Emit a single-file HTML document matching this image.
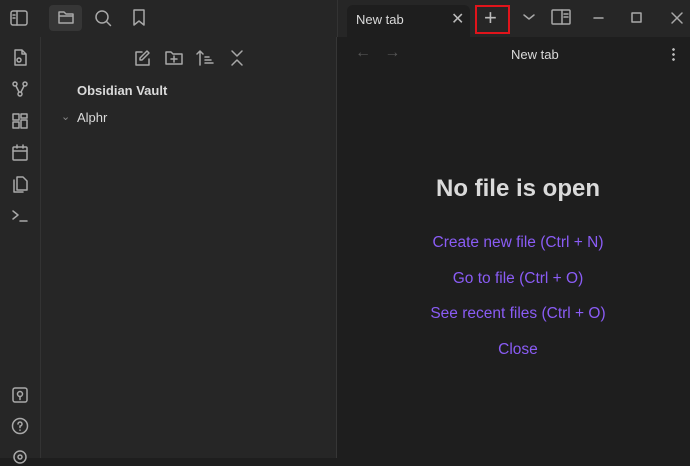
<html><head><style>
body{margin:0;width:690px;height:458px;background:#1e1e1e;font-family:"Liberation Sans",sans-serif;overflow:hidden;position:relative}
.a{position:absolute}
svg{position:absolute;fill:none;stroke:#a8a8a8;stroke-width:1.5;stroke-linecap:round;stroke-linejoin:round}
</style></head><body>
<div class="a" style="left:0;top:0;width:690px;height:37px;background:#262626"></div>
<div class="a" style="left:0;top:37px;width:40px;height:421px;background:#262626;border-right:1px solid #333"></div>
<div class="a" style="left:41px;top:37px;width:295px;height:421px;background:#262626;border-right:1px solid #363636"></div>
<div class="a" style="left:337px;top:0;width:1px;height:37px;background:#333"></div>
<div class="a" style="left:49px;top:5px;width:33px;height:26px;background:#363636;border-radius:4px"></div>
<div class="a" style="left:347px;top:5px;width:123px;height:32px;background:#1e1e1e;border-radius:6px 6px 0 0"></div>
<div class="a" style="left:356px;top:12px;font-size:13px;color:#dadada">New tab</div>
<div class="a" style="left:451px;top:9px;font-size:16px;color:#bbb">✕</div>
<div class="a" style="left:475px;top:5px;width:31px;height:25px;border:2px solid #e0141b"></div>
<div class="a" style="left:484px;top:5px;font-size:22px;color:#bbb">+</div>
<svg style="left:10px;top:10px" width="18" height="16" viewBox="0 0 18 16"><rect x="1" y="1" width="16" height="14" rx="2"/><path d="M7 1v14M3 5h2M3 8h2"/></svg>
<svg style="left:57px;top:9px" width="18" height="16" viewBox="0 0 18 16"><path d="M2 3h5l2 2h7v9H2z M2 7h14"/></svg>
<svg style="left:94px;top:9px" width="18" height="18" viewBox="0 0 18 18"><circle cx="8" cy="8" r="6"/><path d="M12.5 12.5l4 4"/></svg>
<svg style="left:132px;top:9px" width="14" height="17" viewBox="0 0 14 17"><path d="M2 1h10v15l-5-4-5 4z"/></svg>
<svg style="left:522px;top:12px" width="14" height="10" viewBox="0 0 14 10"><path d="M2 3l5 4 5-4"/></svg>
<svg style="left:551px;top:9px" width="20" height="16" viewBox="0 0 20 16"><rect x="1" y="1" width="18" height="14" rx="1"/><path d="M11 1v14M13 5h4M13 8h4"/></svg>
<svg style="left:593px;top:17px" width="12" height="4"><path d="M1 1h9"/></svg>
<svg style="left:631px;top:12px" width="12" height="12"><rect x="1" y="1" width="9" height="9"/></svg>
<svg style="left:670px;top:11px" width="14" height="14"><path d="M2 2l10 10M12 2L2 12"/></svg>
<div class="a" style="left:355px;top:44px;font-size:16px;color:#555">←&nbsp;&nbsp;&nbsp;→</div>
<div class="a" style="left:511px;top:47px;font-size:13px;color:#dadada">New tab</div>
<div class="a" style="left:672px;top:47px;width:3px;height:14px;background:radial-gradient(circle,#bbb 1.2px,transparent 1.5px) 0 0/3px 5px"></div>
<svg style="left:11px;top:49px" width="18" height="18" viewBox="0 0 18 18"><path d="M4 1h7l4 4v11H4z M11 1v4h4"/><circle cx="8" cy="11" r="2"/></svg>
<svg style="left:11px;top:80px" width="18" height="18" viewBox="0 0 18 18"><circle cx="4" cy="4" r="2"/><circle cx="14" cy="4" r="2"/><circle cx="9" cy="14" r="2"/><path d="M5 6l3 6M13 6l-3 6"/></svg>
<svg style="left:11px;top:112px" width="18" height="18" viewBox="0 0 18 18"><rect x="2" y="2" width="6" height="6"/><rect x="10" y="2" width="6" height="4"/><rect x="2" y="10" width="6" height="6"/><rect x="10" y="8" width="6" height="8"/></svg>
<svg style="left:11px;top:144px" width="18" height="18" viewBox="0 0 18 18"><rect x="2" y="3" width="14" height="13" rx="1"/><path d="M2 7h14M6 1v3M12 1v3"/></svg>
<svg style="left:11px;top:175px" width="18" height="18" viewBox="0 0 18 18"><path d="M6 2h6l4 4v9H6z M3 5v12h9"/></svg>
<svg style="left:11px;top:207px" width="18" height="18" viewBox="0 0 18 18"><path d="M2 4l5 4-5 4M9 14h7"/></svg>
<svg style="left:11px;top:386px" width="18" height="18" viewBox="0 0 18 18"><rect x="2" y="2" width="14" height="14" rx="2"/><circle cx="9" cy="8" r="2.5"/><path d="M9 10.5v3"/></svg>
<svg style="left:11px;top:417px" width="18" height="18" viewBox="0 0 18 18"><circle cx="9" cy="9" r="7.5"/><path d="M7 7a2 2 0 1 1 2 2v1.5M9 13v.2"/></svg>
<svg style="left:11px;top:448px" width="18" height="18" viewBox="0 0 18 18"><circle cx="9" cy="9" r="6"/><circle cx="9" cy="9" r="2"/></svg>
<svg style="left:133px;top:49px" width="18" height="18" viewBox="0 0 18 18"><path d="M9 3H3v13h13v-6 M14 2l2 2-7 7H7V9z"/></svg>
<svg style="left:164px;top:50px" width="20" height="16" viewBox="0 0 20 16"><path d="M2 2h5l2 2h9v10H2z M10 6v6M7 9h6"/></svg>
<svg style="left:196px;top:49px" width="18" height="18" viewBox="0 0 18 18"><path d="M4 16V2M1 5l3-3 3 3M9 8h4M9 11h6M9 14h8"/></svg>
<svg style="left:229px;top:49px" width="16" height="18" viewBox="0 0 16 18"><path d="M3 2l5 5 5-5M3 16l5-5 5 5"/></svg>
<div class="a" style="left:77px;top:83px;font-size:13px;font-weight:bold;color:#dadada">Obsidian Vault</div>
<div class="a" style="left:61px;top:110px;font-size:11px;color:#888">⌄</div>
<div class="a" style="left:77px;top:110px;font-size:13px;color:#dadada">Alphr</div>
<div class="a" style="left:338px;top:175px;width:360px;text-align:center;font-size:24px;font-weight:bold;color:#dadada">No file is open</div>
<div class="a" style="left:338px;top:225px;width:360px;text-align:center;font-size:15.5px;color:#8a5cf5;line-height:35.6px">Create new file (Ctrl + N)<br>Go to file (Ctrl + O)<br>See recent files (Ctrl + O)<br>Close</div>
</body></html>
